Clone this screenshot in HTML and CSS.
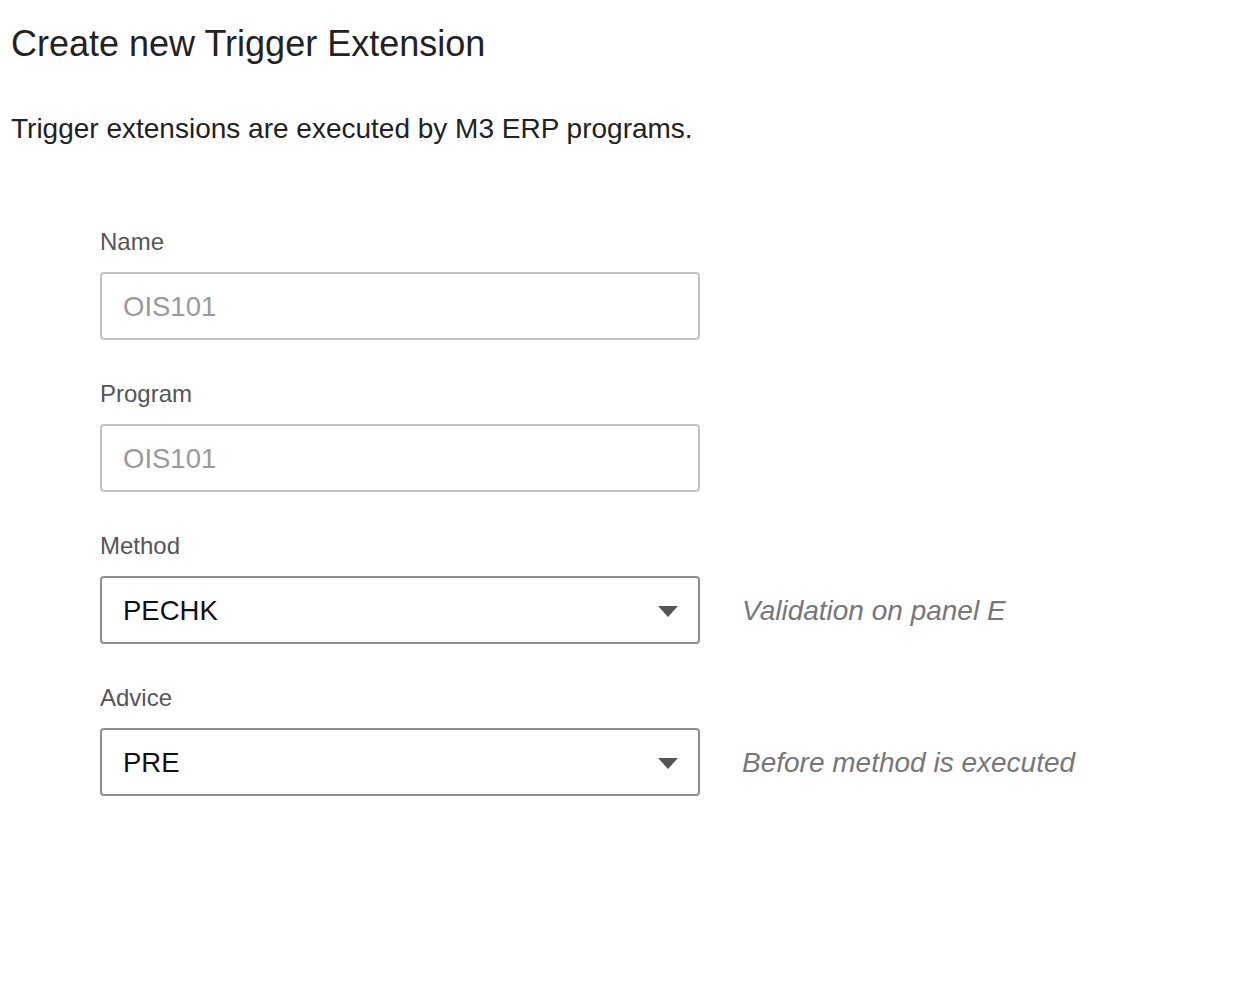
FILE: index.html
```html
<!DOCTYPE html>
<html>
<head>
<meta charset="utf-8">
<link rel="stylesheet" href="styles.css">
</head>
<body>
<div class="page">
  <h1 class="title">Create new Trigger Extension</h1>
  <p class="intro">Trigger extensions are executed by M3 ERP programs.</p>
  <div class="form">
    <div class="field">
      <div class="label">Name</div>
      <div class="row">
        <div class="box disabled">OIS101</div>
      </div>
    </div>
    <div class="field">
      <div class="label">Program</div>
      <div class="row">
        <div class="box disabled">OIS101</div>
      </div>
    </div>
    <div class="field">
      <div class="label">Method</div>
      <div class="row">
        <div class="box select"><span>PECHK</span><span class="arrow"></span></div>
        <div class="hint">Validation on panel E</div>
      </div>
    </div>
    <div class="field">
      <div class="label">Advice</div>
      <div class="row">
        <div class="box select"><span>PRE</span><span class="arrow"></span></div>
        <div class="hint">Before method is executed</div>
      </div>
    </div>
  </div>
</div>
</body>
</html>
```
FILE: styles.css
```css
html, body {
  margin: 0;
  padding: 0;
  background: #ffffff;
}
body {
  font-family: "Liberation Sans", Arial, Helvetica, sans-serif;
  color: #1a1a1a;
}
.page {
  padding: 20px 0 0 11px;
}
.title {
  margin: 0;
  font-size: 36px;
  font-weight: normal;
  line-height: 48px;
  color: #222;
}
.intro {
  margin: 45px 0 0 0;
  font-size: 28px;
  line-height: 32px;
  color: #222;
}
.form {
  margin-top: 83px;
  padding-left: 89px;
  display: flex;
  flex-direction: column;
  gap: 40px;
}
.field {
  display: flex;
  flex-direction: column;
  gap: 16px;
}
.label {
  font-size: 24px;
  line-height: 28px;
  color: #555;
}
.row {
  display: flex;
  align-items: center;
  gap: 42px;
}
.box {
  box-sizing: border-box;
  width: 600px;
  height: 68px;
  border: 2px solid #c2c2c2;
  border-radius: 4px;
  padding: 2px 20px 0 21px;
  display: flex;
  align-items: center;
  font-size: 27.5px;
}
.disabled {
  color: #9a9a9a;
}
.select {
  border-color: #8e8e8e;
  color: #111;
  justify-content: space-between;
}
.arrow {
  width: 0;
  height: 0;
  border-left: 10px solid transparent;
  border-right: 10px solid transparent;
  border-top: 11px solid #555;
}
.hint {
  font-size: 28px;
  font-style: italic;
  color: #777;
  padding-top: 2px;
}
```
